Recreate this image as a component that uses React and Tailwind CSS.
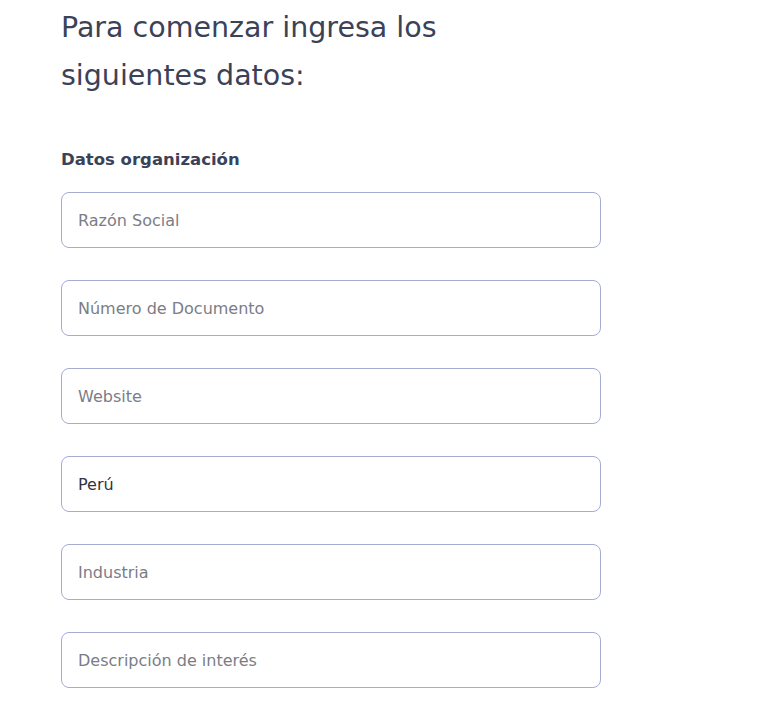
import React from 'react';

const fields = [
  { placeholder: 'Razón Social' },
  { placeholder: 'Número de Documento' },
  { placeholder: 'Website' },
  { value: 'Perú' },
  { placeholder: 'Industria' },
  { placeholder: 'Descripción de interés' },
];

export default function App() {
  return (
    <div className="min-h-[710px] bg-white pl-[61px] pt-[4px] font-['DejaVu_Sans',sans-serif]">
      <h1 className="w-[440px] text-[28.5px] leading-[48px] text-[#3b4258] font-normal">
        Para comenzar ingresa los siguientes datos:
      </h1>
      <h2 className="mt-[48px] text-[16.5px] leading-[24px] font-bold text-[#3b4258]">
        Datos organización
      </h2>
      <form className="mt-[20px] flex flex-col gap-[32px] w-[540px]">
        {fields.map((f, i) => (
          <input
            key={i}
            type="text"
            placeholder={f.placeholder}
            defaultValue={f.value}
            className="h-[56px] w-full rounded-[8px] border border-[#a4acd4] px-[16px] text-[16px] text-[#2f3342] placeholder:text-[#7b7d86] outline-none"
          />
        ))}
      </form>
    </div>
  );
}
